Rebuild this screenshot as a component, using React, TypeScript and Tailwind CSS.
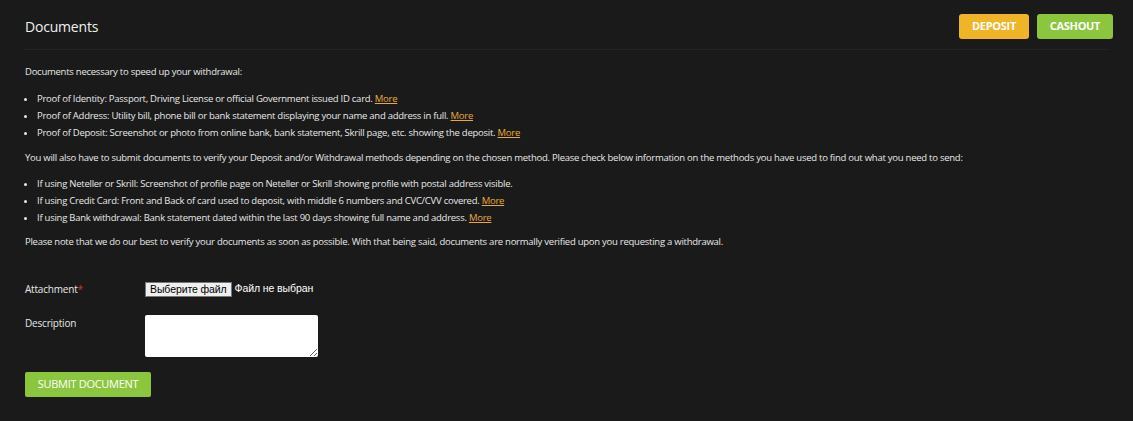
import React from "react";

const FONT = { fontFamily: '"Open Sans", "Noto Sans", sans-serif' };

function More() {
  return <a href="#" className="text-[#e9a93a] underline">More</a>;
}

export default function App() {
  return (
    <div className="min-h-[421px] w-full bg-[#1a1a1a] text-[#e8e8e8]" style={FONT}>
      <div className="px-[24px]">
        {/* header */}
        <div className="flex items-center justify-between h-[50px] pt-[4px] border-b border-[#242424]">
          <h1 className="pl-[1px] text-[14px] text-[#f0f0f0] tracking-[-0.2px]">Documents</h1>
          <div className="flex gap-[8px] mr-[-4px]">
            <button className="h-[25px] w-[70px] rounded-[3px] bg-[#f0b429] text-white text-[11px] font-bold tracking-[-0.3px]">DEPOSIT</button>
            <button className="h-[25px] w-[76px] rounded-[3px] bg-[#8cc63f] text-white text-[11px] font-bold tracking-[-0.3px]">CASHOUT</button>
          </div>
        </div>

        {/* body text */}
        <div className="pt-[13px] pl-[1px] text-[9.5px] leading-[17px] tracking-[-0.25px]">
          <p>Documents necessary to speed up your withdrawal:</p>
          <ul className="mt-[10px] list-disc pl-[12px]">
            <li>Proof of Identity: Passport, Driving License or official Government issued ID card. <More /></li>
            <li>Proof of Address: Utility bill, phone bill or bank statement displaying your name and address in full. <More /></li>
            <li>Proof of Deposit: Screenshot or photo from online bank, bank statement, Skrill page, etc. showing the deposit. <More /></li>
          </ul>
          <p className="mt-[8px]">
            You will also have to submit documents to verify your Deposit and/or Withdrawal methods depending on the chosen method. Please check below information on the methods you have used to find out what you need to send:
          </p>
          <ul className="mt-[9px] list-disc pl-[12px]">
            <li>If using Neteller or Skrill: Screenshot of profile page on Neteller or Skrill showing profile with postal address visible.</li>
            <li>If using Credit Card: Front and Back of card used to deposit, with middle 6 numbers and CVC/CVV covered. <More /></li>
            <li>If using Bank withdrawal: Bank statement dated within the last 90 days showing full name and address. <More /></li>
          </ul>
          <p className="mt-[7px]">
            Please note that we do our best to verify your documents as soon as possible. With that being said, documents are normally verified upon you requesting a withdrawal.
          </p>
        </div>

        {/* form */}
        <div className="mt-[31px] pl-[1px] text-[10px] tracking-[-0.2px]">
          <div className="flex items-center h-[16px]">
            <label className="w-[120px]">
              Attachment<span className="text-[#d9342b]">*</span>
            </label>
            <div className="flex items-center gap-[3px]" style={{ fontFamily: '"Liberation Sans", Arial, sans-serif' }}>
              <span className="h-[15px] px-[4px] flex items-center bg-[#efefef] border border-[#767676] text-black text-[10.5px] tracking-[-0.1px] leading-none">Выберите файл</span>
              <span className="text-white text-[10.5px] tracking-[-0.1px]">Файл не выбран</span>
            </div>
          </div>
          <div className="flex mt-[18px]">
            <label className="w-[120px] pt-[1px]">Description</label>
            <textarea className="w-[173px] h-[42px] bg-white rounded-[2px] resize-y" />
          </div>
          <button className="mt-[15px] h-[25px] w-[126px] rounded-[2px] bg-[#8cc63f] text-white text-[11px] tracking-[-0.3px]">SUBMIT DOCUMENT</button>
        </div>
      </div>
    </div>
  );
}
